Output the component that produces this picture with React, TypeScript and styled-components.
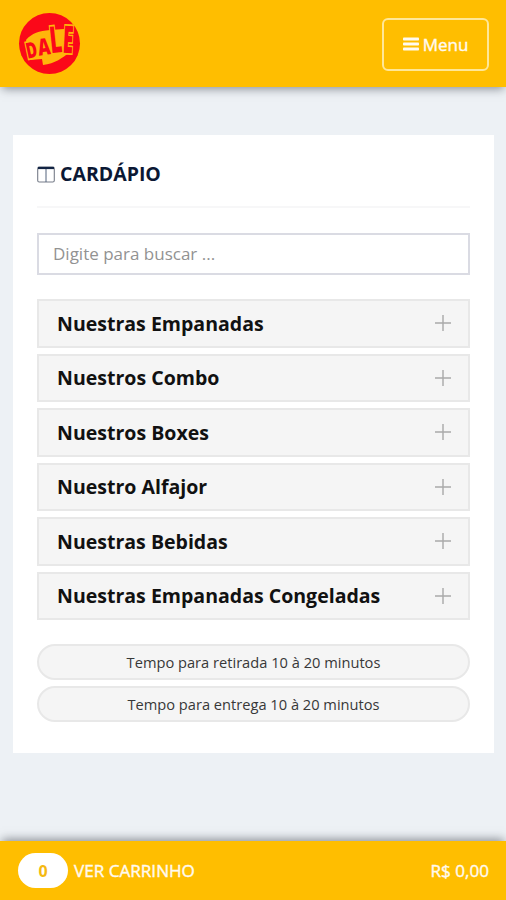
import React from "react";
import styled, { createGlobalStyle } from "styled-components";

const Global = createGlobalStyle`
  * { box-sizing: border-box; }
  body { margin: 0; background: #edf1f5; font-family: "Open Sans", sans-serif; color: #111; }
`;

const Page = styled.div`
  height: 900px;
  display: flex;
  flex-direction: column;
  overflow: hidden;
  background: #edf1f5;
`;

const Header = styled.header`
  height: 87px;
  flex: none;
  display: flex;
  align-items: center;
  justify-content: space-between;
  padding: 0 17px 0 18px;
  background: #ffbe00;
  box-shadow: 0 4px 9px -2px rgba(60, 65, 75, 0.55);
`;

const Logo = styled.svg`
  width: 63px;
  height: 63px;
  display: block;
`;

const MenuButton = styled.button`
  width: 107px;
  height: 53px;
  margin-top: 2px;
  padding: 0;
  display: flex;
  align-items: center;
  justify-content: center;
  gap: 4px;
  border: 2px solid #ffe797;
  border-radius: 6px;
  background: transparent;
  color: #fffaf0;
  font: 500 17px "Open Sans", sans-serif;
  -webkit-text-stroke: 0.4px #fffaf0;
`;

const Content = styled.main`
  flex: 1;
  padding: 48px 12px 0 13px;
`;

const Card = styled.section`
  height: 618px;
  padding: 24px 24px 0;
  background: #fff;
`;

const Title = styled.h1`
  height: 49px;
  margin: 0 0 25px;
  padding-top: 1px;
  display: flex;
  align-items: flex-start;
  gap: 5px;
  border-bottom: 2px solid #f7f7f8;
  color: #0b1834;
  font-size: 19.5px;
  line-height: 27px;
  font-weight: 700;

  svg { margin-top: 6px; }
`;

const Search = styled.input`
  display: block;
  width: 100%;
  height: 42px;
  padding: 0 14px 2px;
  border: 2px solid #dadbe3;
  border-radius: 0;
  outline: none;
  background: #fff;
  color: #444;
  font: 17px "Open Sans", sans-serif;

  &::placeholder { color: #929292; opacity: 1; }
`;

const Categories = styled.div`
  display: grid;
  grid-auto-rows: 48.5px;
  gap: 6px;
  margin-top: 24px;
`;

const Category = styled.button`
  display: flex;
  align-items: center;
  justify-content: space-between;
  padding: 0 17px 0 18px;
  border: 2px solid #e8e8e8;
  background: #f5f5f5;
  color: #111;
  font: 700 19.55px "Open Sans", sans-serif;
`;

const Times = styled.div`
  display: grid;
  grid-auto-rows: 36px;
  gap: 6px;
  margin-top: 24px;
`;

const Time = styled.div`
  display: flex;
  align-items: center;
  justify-content: center;
  padding-bottom: 1px;
  border: 2px solid #e8e8e8;
  border-radius: 18px;
  background: #f5f5f5;
  color: #383838;
  font-size: 14.65px;
`;

const CartBar = styled.footer`
  height: 59px;
  flex: none;
  display: flex;
  align-items: center;
  padding: 0 17px 0 18px;
  background: #ffbe00;
  box-shadow: 0 -4px 9px -2px rgba(60, 65, 75, 0.55);
  color: #fffaf0;
  font-size: 17.1px;
  -webkit-text-stroke: 0.4px #fffaf0;
`;

const Count = styled.span`
  width: 50px;
  height: 35px;
  margin-right: 6px;
  display: flex;
  align-items: center;
  justify-content: center;
  border-radius: 18px;
  background: #fff;
  color: #f5b912;
  font-size: 16px;
  font-weight: 700;
  -webkit-text-stroke: 0;
`;

const Total = styled.span`
  margin-left: auto;
`;

const categories = [
  "Nuestras Empanadas",
  "Nuestros Combo",
  "Nuestros Boxes",
  "Nuestro Alfajor",
  "Nuestras Bebidas",
  "Nuestras Empanadas Congeladas",
];

const times = ["Tempo para retirada 10 à 20 minutos", "Tempo para entrega 10 à 20 minutos"];

const letters = [
  { char: "D", x: 15, y: 45.5, angle: -12, size: 22, stretch: 0.68 },
  { char: "A", x: 27, y: 43, angle: -8, size: 23, stretch: 0.74 },
  { char: "L", x: 39, y: 40.5, angle: -6, size: 37, stretch: 0.56 },
  { char: "E", x: 49.5, y: 41, angle: 3, size: 38, stretch: 0.5 },
];

function DaleLogo() {
  return (
    <Logo viewBox="0 0 63 63" role="img" aria-label="Dale">
      <circle cx="31.5" cy="31.5" r="30.5" fill="#fb0819" />
      <path d="M8 28C14 21 21 19 32 18L46 17L51 41C45 45 37 52 25 53L24 47L12 48Z" fill="#ffb60a" />
      <g
        fill="#fb0819"
        stroke="#ffb60a"
        strokeWidth="3.4"
        paintOrder="stroke"
        textAnchor="middle"
        fontFamily="Open Sans, sans-serif"
        fontWeight="800"
      >
        {letters.map(({ char, x, y, angle, size, stretch }) => (
          <text key={char} fontSize={size} transform={`translate(${x} ${y}) rotate(${angle}) scale(${stretch} 1)`}>
            {char}
          </text>
        ))}
      </g>
    </Logo>
  );
}

function BarsIcon() {
  return (
    <svg width="16" height="15" viewBox="0 0 16 15" fill="#fffaf0">
      <rect y="0.5" width="16" height="3" rx="0.8" />
      <rect y="5.5" width="16" height="3" rx="0.8" />
      <rect y="10.5" width="16" height="3" rx="0.8" />
    </svg>
  );
}

function ColumnsIcon() {
  return (
    <svg width="18" height="17" viewBox="0 0 18 17" fill="none">
      <rect x="0.7" y="1" width="16.6" height="15" rx="1.5" stroke="#777d89" strokeWidth="1.1" />
      <path d="M9 2V16" stroke="#53627c" />
      <path d="M1 2H17" stroke="#122444" strokeWidth="2.2" />
    </svg>
  );
}

function PlusIcon() {
  return (
    <svg width="16" height="16" viewBox="0 0 16 16" stroke="#a9a9a9" strokeWidth="1.4">
      <path d="M8 0V16M0 8H16" />
    </svg>
  );
}

export default function App() {
  return (
    <>
      <Global />
      <Page>
        <Header>
          <DaleLogo />
          <MenuButton><BarsIcon />Menu</MenuButton>
        </Header>
        <Content>
          <Card>
            <Title><ColumnsIcon />CARDÁPIO</Title>
            <Search placeholder="Digite para buscar ..." />
            <Categories>
              {categories.map((name) => (
                <Category key={name}>{name}<PlusIcon /></Category>
              ))}
            </Categories>
            <Times>
              {times.map((text) => <Time key={text}>{text}</Time>)}
            </Times>
          </Card>
        </Content>
        <CartBar>
          <Count>0</Count>
          VER CARRINHO
          <Total>R$ 0,00</Total>
        </CartBar>
      </Page>
    </>
  );
}
